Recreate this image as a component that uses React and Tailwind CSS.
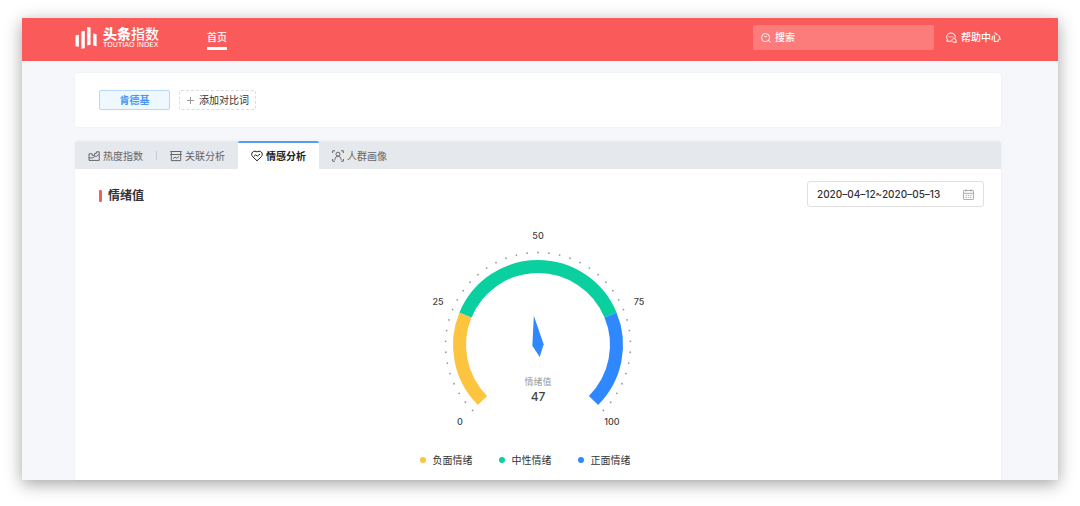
import React, { useState } from 'react';

const tabs = [
  { id: 'heat', label: '热度指数', icon: HeatIcon },
  { id: 'relation', label: '关联分析', icon: RelationIcon },
  { id: 'emotion', label: '情感分析', icon: EmotionIcon },
  { id: 'crowd', label: '人群画像', icon: CrowdIcon },
];

const legend = [
  { label: '负面情绪', dot: 'bg-[#fdc43f]' },
  { label: '中性情绪', dot: 'bg-[#0ad0a0]' },
  { label: '正面情绪', dot: 'bg-[#2f88ff]' },
];

const GAUGE_LABELS = [
  { text: '0', x: -78, y: 76 },
  { text: '25', x: -100, y: -44 },
  { text: '50', x: 0, y: -110 },
  { text: '75', x: 101, y: -44 },
  { text: '100', x: 74, y: 76 },
];

// value 0-100 is spread over 270 degrees, starting bottom left
const pointAt = (value, radius) => {
  const rad = ((225 - value * 2.7) * Math.PI) / 180;
  return [radius * Math.cos(rad), -radius * Math.sin(rad)];
};

const arcPath = (from, to, radius) => {
  const [x1, y1] = pointAt(from, radius);
  const [x2, y2] = pointAt(to, radius);
  return `M${x1} ${y1}A${radius} ${radius} 0 0 1 ${x2} ${y2}`;
};

function HeatIcon() {
  return (
    <svg viewBox="0 0 12 12" className="w-3 h-3" fill="none" stroke="currentColor" aria-hidden="true">
      <path d="M1 10.4V3.8H4.2V5.4H6.6V3.4H8.4V1.8H11.2V10.4Z" />
      <path d="M1 7.9H4.6L7.2 6.3H8.8L11 4.2" />
    </svg>
  );
}

function RelationIcon() {
  return (
    <svg viewBox="0 0 12 12" className="w-3 h-3" fill="none" stroke="currentColor" aria-hidden="true">
      <path d="M0.3 1.5H11.7M0.3 4.5H11.7M1.3 1.5V10.6H10.7V1.5" />
      <path d="M3 8.7L5 7.1L6.8 8.2L9 6.5" />
    </svg>
  );
}

function EmotionIcon() {
  return (
    <svg viewBox="0 0 12 12" className="w-3 h-3" fill="none" stroke="currentColor" strokeLinejoin="round" aria-hidden="true">
      <path d="M6 10.8L1.7 6.7C0.3 5.2 0.4 3.1 1.7 2C3 0.9 4.9 1 6 2C7.1 1 9 0.9 10.3 2C11.6 3.1 11.7 5.2 10.3 6.7Z" />
      <path d="M2.8 6.4L4.8 4.8L6.3 6.2L9 4" />
    </svg>
  );
}

function CrowdIcon() {
  return (
    <svg viewBox="0 0 12 12" className="w-3 h-3" fill="none" stroke="currentColor" aria-hidden="true">
      <path d="M0.6 3V0.8H3M9 0.8H11.4V3M11.4 9V11.2H9M3 11.2H0.6V9" />
      <circle cx="6" cy="4.2" r="2" />
      <path d="M2.8 9.8C3.2 7.4 4.3 6.2 6 6.2C7.7 6.2 8.8 7.4 9.2 9.8" />
    </svg>
  );
}

const Logo = () => (
  <a href="#" className="flex items-center gap-[6px] w-[84px] text-white">
    <svg viewBox="0 0 22 24" className="w-[22px] h-6 shrink-0" fill="currentColor" aria-hidden="true">
      <path d="M0.5 9.4L3.9 8.8V20.8L0.5 20.2Z" />
      <path d="M6.4 5.4L9.8 4.8V22.2L6.4 22.8Z" />
      <path d="M12.2 1L15.6 1.6V18.8L12.2 19.4Z" />
      <path d="M18.2 7.6L21.6 8.2V20.2L18.2 19.6Z" />
    </svg>
    <span className="flex flex-col">
      <span className="text-[14px] leading-[15px] font-medium whitespace-nowrap">
        <b className="font-black">头条</b>指数
      </span>
      <span className="text-[7px] leading-[8px] font-['DejaVu_Sans',sans-serif] font-normal whitespace-nowrap">TOUTIAO INDEX</span>
    </span>
  </a>
);

const Gauge = ({ value }) => (
  <svg viewBox="-120 -120 240 206" className="w-[240px] h-[206px]" role="img" aria-label="情绪值">
    <g fill="none" strokeWidth="13">
      <path d={arcPath(0, 25, 78.5)} stroke="#fdc43f" />
      <path d={arcPath(25, 75, 78.5)} stroke="#0ad0a0" />
      <path d={arcPath(75, 100, 78.5)} stroke="#2f88ff" />
    </g>
    {Array.from({ length: 41 }, (_, i) => {
      const [cx, cy] = pointAt(i * 2.5, 92.5);
      return <circle key={i} cx={cx} cy={cy} r="0.9" fill="#999" />;
    })}
    <path d="M0 -29.5L5.7 0L0 12L-5.7 0Z" fill="#2f88ff" transform={`rotate(${(value - 50) * 2.7})`} />
    <g textAnchor="middle" dominantBaseline="central" fill="#444" fontFamily="Inter, 'Noto Sans CJK SC', sans-serif" fontSize="9" fontWeight="500">
      {GAUGE_LABELS.map((item) => (
        <text key={item.text} x={item.x} y={item.y}>{item.text}</text>
      ))}
      <text x="0" y="36" fill="#999" fontWeight="400">情绪值</text>
      <text x="0" y="51" fontSize="12">{value}</text>
    </g>
  </svg>
);

const App = () => {
  const [activeTab, setActiveTab] = useState('emotion');
  const [keyword, setKeyword] = useState('');

  return (
    <div className="min-h-screen flex flex-col bg-white px-[22px] pt-[18px] pb-[26px] font-['Inter','Noto_Sans_CJK_SC',sans-serif] text-[#333]">
      <div className="flex-1 flex flex-col bg-[#f6f7fa] shadow-[0_4px_16px_rgba(0,0,0,0.36)]">
        {/* Header */}
        <header className="flex items-center h-[43px] bg-[#fa5a5a] pl-[53px] pr-[57px] pb-1 text-white text-[10px] font-medium">
          <Logo />
          <nav className="ml-12 pt-1">
            <a href="#" className="block border-b-3 border-white leading-4 pb-[2px]">首页</a>
          </nav>
          <label className="ml-auto flex items-center gap-1 w-[181px] h-[25px] px-2 rounded-[2px] bg-[#fc7b7b]">
            <svg viewBox="0 0 10 10" className="w-[10px] h-[10px] shrink-0" fill="none" stroke="currentColor" strokeWidth="0.9" aria-hidden="true">
              <circle cx="4.6" cy="4.6" r="4" />
              <path d="M7.4 7.4L9.4 9.2M3 3.1C4 3.8 5.2 3.8 6.2 3.1" />
            </svg>
            <input
              type="text"
              aria-label="搜索"
              placeholder="搜索"
              value={keyword}
              onChange={(e) => setKeyword(e.target.value)}
              className="min-w-0 flex-1 bg-transparent outline-none placeholder:text-white"
            />
          </label>
          <a href="#" className="ml-3 flex items-center gap-1">
            <svg viewBox="0 0 11 11" className="w-[11px] h-[11px]" fill="none" stroke="currentColor" aria-hidden="true">
              <path d="M5.4 9.2H0.7L1.5 7.8C-0.6 4.3 1.6 1 5 1C7.8 1 9.6 3 9.3 5.8" />
              <path d="M10.5 10.2H7.6C5.2 10.2 5.2 6.6 7.8 6.6C10 6.6 10.6 8.4 9.8 9.4Z" />
              <path d="M2.6 4.8H3.7M4.5 4.8H5.6M6.4 4.8H7.4" />
            </svg>
            帮助中心
          </a>
        </header>

        <main className="flex-1 flex flex-col pl-[53px] pr-[57px] pt-3">
          {/* Keywords */}
          <section className="flex items-center gap-[9px] bg-white rounded-[2px] px-6 h-[54px] shadow-[0_0_3px_rgba(0,0,0,0.05)]">
            <button type="button" className="w-[71px] h-5 rounded-[2px] border border-[#b5d8fb] bg-[#f0f8ff] text-[#4a96f8] text-[10px] font-bold">
              肯德基
            </button>
            <button type="button" className="flex items-center gap-1 h-5 px-[6px] rounded-[2px] border border-dashed border-[#dcdcdc] text-[10px]">
              <svg viewBox="0 0 9 9" className="w-[9px] h-[9px]" stroke="#999" aria-hidden="true">
                <path d="M4.5 1V8M1 4.5H8" />
              </svg>
              添加对比词
            </button>
          </section>

          <section className="flex-1 flex flex-col mt-[14px] bg-white shadow-[0_0_3px_rgba(0,0,0,0.05)]">
            {/* Tabs */}
            <div role="tablist" className="flex h-7 bg-[#e5e8ed] rounded-t-[2px]">
              {tabs.map((tab, i) => {
                const Icon = tab.icon;
                const active = tab.id === activeTab;
                return (
                  <div key={tab.id} className="flex items-center">
                    {i === 1 && <span className="w-px h-[9px] bg-[#c8ccd2]"></span>}
                    <button
                      type="button"
                      role="tab"
                      aria-selected={active}
                      onClick={() => setActiveTab(tab.id)}
                      className={
                        active
                          ? 'flex items-center gap-[3px] h-full px-[13px] border-t-2 border-[#5a9cf0] rounded-t-[2px] bg-white text-[10px] font-bold text-[#222]'
                          : 'flex items-center gap-[3px] h-full px-[13px] border-t-2 border-transparent text-[10px] text-[#666]'
                      }
                    >
                      <Icon />
                      {tab.label}
                    </button>
                  </div>
                );
              })}
            </div>

            {/* Title and date range */}
            <div className="flex items-center justify-between pl-6 pr-[17px] pt-3">
              <h2 className="flex items-center gap-[6px] pt-1 text-[12px] font-bold text-[#333]">
                <span className="w-[3px] h-3 rounded-[1px] bg-[#fa5a5a]"></span>
                情绪值
              </h2>
              <label className="flex items-center w-[177px] h-[26px] px-[9px] rounded-[3px] border border-[#e0e0e0]">
                <input
                  type="text"
                  readOnly
                  aria-label="日期"
                  value="2020–04–12~2020–05–13"
                  className="min-w-0 flex-1 text-[10px] font-medium outline-none"
                />
                <svg viewBox="0 0 11 11" className="w-[11px] h-[11px]" fill="none" stroke="#999" strokeWidth="0.8" aria-hidden="true">
                  <rect x="0.5" y="1.5" width="10" height="9" rx="0.6" />
                  <path d="M0.5 4.3H10.5M3 0.2V2.6M8 0.2V2.6" />
                  <path d="M2.5 6.3H4M4.8 6.3H6.2M7 6.3H8.5M2.5 8.4H4M4.8 8.4H6.2M7 8.4H8.5" />
                </svg>
              </label>
            </div>

            <div className="flex justify-center mt-[18px]">
              <Gauge value={47} />
            </div>

            {/* Legend */}
            <ul className="flex justify-center mt-[21px] pb-3 text-[10px] leading-4">
              {legend.map((item) => (
                <li key={item.label} className="flex items-center gap-[7px] mr-[26px]">
                  <span className={`w-[6px] h-[6px] rounded-full ${item.dot}`}></span>
                  {item.label}
                </li>
              ))}
            </ul>
          </section>
        </main>
      </div>
    </div>
  );
};

export default App;
